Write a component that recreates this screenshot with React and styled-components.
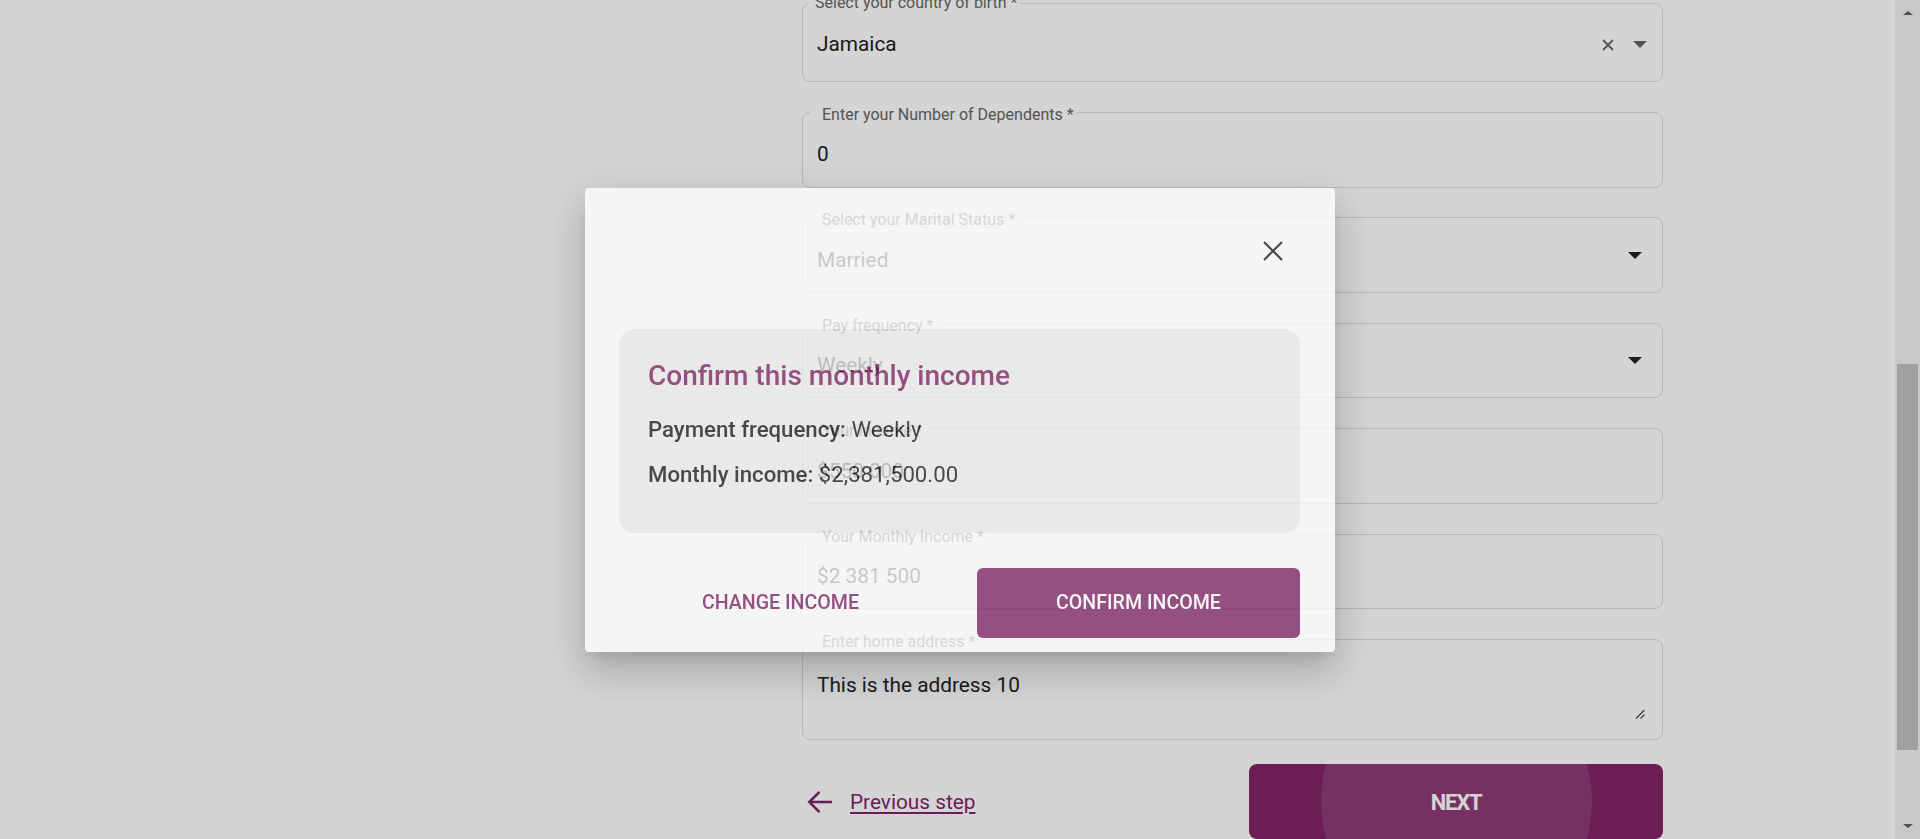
import React from 'react';
import styled, { createGlobalStyle } from 'styled-components';

const BRAND = '#812567';

const GlobalStyle = createGlobalStyle`
  html, body { margin: 0; padding: 0; height: 100%; overflow: hidden; background: #ffffff; }
  body { font-family: Roboto, "Liberation Sans", Arial, sans-serif; color: #212121; }
  *, *::before, *::after { box-sizing: border-box; }
  #root { height: 100%; }
`;

const Screen = styled.div`
  display: flex;
  height: 100vh;
  overflow: hidden;
`;

const Main = styled.main`
  flex: 1;
  display: grid;
  grid-template-columns: 802px 861px 1fr;
  align-items: start;
`;

const Aside = styled.div``;

const FormColumn = styled.section`
  display: flex;
  flex-direction: column;
  padding-top: 3.3px;
`;

const FieldStack = styled.div`
  display: flex;
  flex-direction: column;
  gap: 29.8px;
`;

const Field = styled.div`
  position: relative;
  height: ${p => p.$h}px;
  border: 1px solid #dedede;
  border-radius: 8px;
  display: flex;
  align-items: ${p => (p.$multiline ? 'flex-start' : 'center')};
  padding: ${p => p.$pt}px 14px 0 14px;
`;

const FloatLabel = styled.span`
  position: absolute;
  top: ${p => p.$top}px;
  left: ${p => p.$left}px;
  padding: 0 3px 0 ${p => p.$padLeft}px;
  background: #ffffff;
  font-size: 16px;
  line-height: 16px;
  color: #666666;
  white-space: nowrap;
`;

const Value = styled.div`
  flex: 1;
  font-size: 20.8px;
  line-height: 1.4375;
  color: #212121;
  padding-top: ${p => p.$shift}px;
`;

const Adornments = styled.div`
  display: flex;
  align-items: center;
  gap: ${p => p.$gap}px;
  margin-right: ${p => p.$mr}px;
  align-self: ${p => (p.$bottom ? 'flex-end' : 'center')};
  margin-bottom: ${p => (p.$bottom ? 20 : 0)}px;
`;

const Triangle = styled.span`
  width: 0;
  height: 0;
  border-left: 7px solid transparent;
  border-right: 7px solid transparent;
  border-top: 7px solid ${p => p.$color};
`;

const Actions = styled.div`
  display: flex;
  align-items: center;
  justify-content: space-between;
  margin-top: 24px;
`;

const PrevLink = styled.a`
  display: flex;
  align-items: center;
  gap: 17px;
  padding-left: 5px;
  color: ${BRAND};
  font-size: 20.8px;
  text-decoration: none;
  cursor: pointer;
  span {
    text-decoration: underline;
    text-underline-offset: 3px;
  }
`;

const NextButton = styled.button`
  position: relative;
  overflow: hidden;
  width: 414px;
  height: 75px;
  border: 0;
  border-radius: 8px;
  background: ${BRAND};
  color: #ffffff;
  font-family: Roboto, "Liberation Sans", Arial, sans-serif;
  font-size: 22px;
  font-weight: 700;
  letter-spacing: -1.2px;
  display: flex;
  align-items: center;
  justify-content: center;
`;

const Ripple = styled.span`
  position: absolute;
  left: 50%;
  top: 50%;
  width: 271px;
  height: 271px;
  margin: -135.5px 0 0 -135.5px;
  border-radius: 50%;
  background: rgba(255, 255, 255, 0.11);
`;

const ButtonLabel = styled.span`
  position: relative;
  padding-top: 2px;
`;

const Scrollbar = styled.div`
  width: 25px;
  flex: none;
  background: #c9c9c9;
  display: flex;
  flex-direction: column;
  align-items: center;
`;

const ScrollArrow = styled.div`
  height: 26px;
  display: flex;
  align-items: center;
  justify-content: center;
  &::before {
    content: '';
    border-left: 5.5px solid transparent;
    border-right: 5.5px solid transparent;
    ${p => (p.$down ? 'border-top' : 'border-bottom')}: 4px solid #505050;
  }
`;

const ScrollTrack = styled.div`
  flex: 1;
  width: 100%;
  display: flex;
  justify-content: center;
`;

const ScrollThumb = styled.div`
  margin-top: ${p => p.$top}px;
  width: 21px;
  height: ${p => p.$h}px;
  background: #a0a0a0;
`;

/* ---------- modal ---------- */

const ModalLayer = styled.div`
  position: fixed;
  inset: 0;
  display: flex;
  align-items: center;
  justify-content: center;
`;

const Backdrop = styled.div`
  position: absolute;
  top: 0;
  left: 0;
  bottom: 0;
  right: 25px;
  background: rgba(0, 0, 0, 0.17);
`;

const Dialog = styled.div`
  position: relative;
  width: 750px;
  background: #ffffff;
  border-radius: 4px;
  opacity: 0.755;
  padding: 0 35px 14px 34px;
  display: flex;
  flex-direction: column;
  box-shadow: 0 11px 15px -7px rgba(0, 0, 0, 0.2), 0 24px 38px 3px rgba(0, 0, 0, 0.14),
    0 9px 46px 8px rgba(0, 0, 0, 0.12);
`;

const DialogHeader = styled.div`
  height: 141px;
  display: flex;
  justify-content: flex-end;
  align-items: flex-start;
  padding-top: 39px;
`;

const CloseButton = styled.button`
  width: 48px;
  height: 48px;
  margin-right: 3px;
  border: 0;
  background: transparent;
  display: flex;
  align-items: center;
  justify-content: center;
  padding: 0;
  color: #1e1e1e;
`;

const SummaryCard = styled.div`
  background: #f0f0f0;
  border-radius: 16px;
  padding: 30.6px 29px 40px;
  height: 204px;
`;

const Title = styled.h2`
  margin: 0 0 20px;
  font-size: 28px;
  line-height: 1.2;
  font-weight: 500;
  color: ${BRAND};
`;

const SummaryLines = styled.div`
  display: flex;
  flex-direction: column;
  gap: 13px;
`;

const SummaryLine = styled.p`
  margin: 0;
  font-size: 22.2px;
  line-height: 1.45;
  color: #1a1a1a;
  b {
    font-weight: 500;
  }
`;

const DialogActions = styled.div`
  display: grid;
  grid-template-columns: 1fr 1fr;
  gap: 35px;
  margin-top: 35px;
`;

const DialogButton = styled.button`
  height: 70px;
  border: 0;
  border-radius: 6px;
  font-family: Roboto, "Liberation Sans", Arial, sans-serif;
  font-size: 19.6px;
  font-weight: 500;
  text-transform: uppercase;
  background: ${p => (p.$primary ? BRAND : 'transparent')};
  color: ${p => (p.$primary ? '#ffffff' : BRAND)};
`;

const ClearIcon = () => (
  <svg width="12" height="12" viewBox="0 0 12 12">
    <path d="M1 1 11 11 M11 1 1 11" stroke="#666" strokeWidth="1.8" fill="none" />
  </svg>
);

const ResizeIcon = () => (
  <svg width="10" height="10" viewBox="0 0 10 10">
    <path d="M9.5 1 1 9.5 M9.5 5.5 5.5 9.5" stroke="#444" strokeWidth="1.1" fill="none" />
  </svg>
);

const ArrowBack = () => (
  <svg width="26" height="24" viewBox="0 0 26 24">
    <path d="M25 12H2.5 M12.5 1.8 2.3 12 12.5 22.2" stroke="currentColor" strokeWidth="2.6" fill="none" />
  </svg>
);

const CloseIcon = () => (
  <svg width="20" height="20" viewBox="0 0 20 20">
    <path d="M1 1 19 19 M19 1 1 19" stroke="currentColor" strokeWidth="2.2" fill="none" />
  </svg>
);

const fields = [
  { label: 'Select your country of birth *', value: 'Jamaica', kind: 'autocomplete', h: 79, pt: 4.4, shift: 0, labelTop: -9, labelLeft: 5, labelPad: 7 },
  { label: 'Enter your Number of Dependents *', value: '0', h: 75.6 },
  { label: 'Select your Marital Status *', value: 'Married', kind: 'select', h: 75.6 },
  { label: 'Pay frequency *', value: 'Weekly', kind: 'select', h: 75.6 },
  { label: 'Your Income *', value: '$550 000', h: 75.6 },
  { label: 'Your Monthly Income *', value: '$2 381 500', h: 75.6 },
  { label: 'Enter home address *', value: 'This is the address 10', kind: 'multiline', h: 101.3, pt: 31, shift: 0 },
];

function OutlinedField({ f }) {
  const multiline = f.kind === 'multiline';
  return (
    <Field $h={f.h} $pt={f.pt ?? 0} $multiline={multiline}>
      <FloatLabel $top={f.labelTop ?? -6} $left={f.labelLeft ?? 7} $padLeft={f.labelPad ?? 12}>
        {f.label}
      </FloatLabel>
      <Value $shift={f.shift ?? 11}>{f.value}</Value>
      {f.kind === 'autocomplete' && (
        <Adornments $gap={19} $mr={1}>
          <ClearIcon />
          <Triangle $color="#666" />
        </Adornments>
      )}
      {f.kind === 'select' && (
        <Adornments $gap={0} $mr={6}>
          <Triangle $color="#212121" />
        </Adornments>
      )}
      {multiline && (
        <Adornments $gap={0} $mr={3} $bottom>
          <ResizeIcon />
        </Adornments>
      )}
    </Field>
  );
}

export default function App() {
  return (
    <>
      <GlobalStyle />
      <Screen>
        <Main>
          <Aside />
          <FormColumn>
            <FieldStack>
              {fields.map(f => (
                <OutlinedField key={f.label} f={f} />
              ))}
            </FieldStack>
            <Actions>
              <PrevLink>
                <ArrowBack />
                <span>Previous step</span>
              </PrevLink>
              <NextButton>
                <Ripple />
                <ButtonLabel>NEXT</ButtonLabel>
              </NextButton>
            </Actions>
          </FormColumn>
        </Main>
        <Scrollbar>
          <ScrollArrow />
          <ScrollTrack>
            <ScrollThumb $top={338} $h={386} />
          </ScrollTrack>
          <ScrollArrow $down />
        </Scrollbar>
      </Screen>

      <ModalLayer>
        <Backdrop />
        <Dialog role="dialog">
          <DialogHeader>
            <CloseButton aria-label="close">
              <CloseIcon />
            </CloseButton>
          </DialogHeader>
          <SummaryCard>
            <Title>Confirm this monthly income</Title>
            <SummaryLines>
              <SummaryLine>
                <b>Payment frequency:</b> Weekly
              </SummaryLine>
              <SummaryLine>
                <b>Monthly income:</b> $2,381,500.00
              </SummaryLine>
            </SummaryLines>
          </SummaryCard>
          <DialogActions>
            <DialogButton>Change income</DialogButton>
            <DialogButton $primary>Confirm income</DialogButton>
          </DialogActions>
        </Dialog>
      </ModalLayer>
    </>
  );
}
